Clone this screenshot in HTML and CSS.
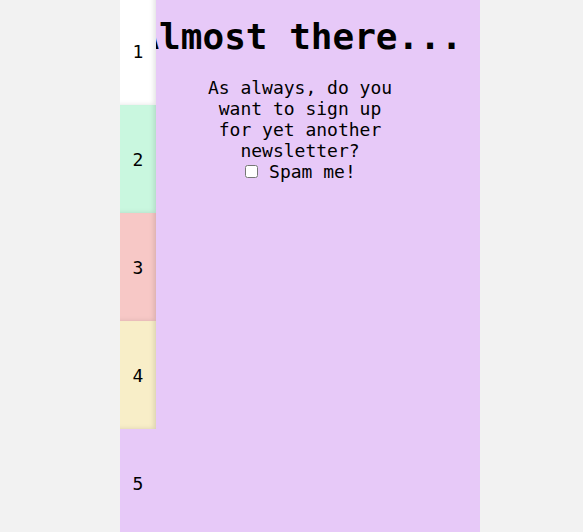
FILE: index.html
```html
<!DOCTYPE html>
<html>
<head>
<meta charset="utf-8">
<link rel="stylesheet" href="styles.css">
</head>
<body>
<div class="frame">
  <div class="panel">
    <h1 class="title">Almost there...</h1>
    <p class="text">As always, do you want to sign up for yet another newsletter?</p>
    <label class="check"><input type="checkbox"> Spam me!</label>
  </div>
  <nav class="tabs">
    <div class="tab t1">1</div>
    <div class="tab t2">2</div>
    <div class="tab t3">3</div>
    <div class="tab t4">4</div>
    <div class="tab t5">5</div>
  </nav>
</div>
</body>
</html>
```
FILE: styles.css
```css
html, body {
  margin: 0;
  padding: 0;
  background: #f2f2f2;
  overflow: hidden;
}
.frame {
  position: relative;
  width: 360px;
  height: 532px;
  margin-left: 120px;
  background: #e7c9f8;
  font-family: "DejaVu Sans Mono", monospace;
  color: #000;
}
.panel {
  display: flex;
  flex-direction: column;
  align-items: center;
  padding-top: 16px;
}
.title {
  margin: 0;
  font-size: 36px;
  font-weight: bold;
  white-space: nowrap;
  line-height: 42px;
}
.text {
  width: 196px;
  margin: 19px 0 0;
  font-size: 18px;
  line-height: 21px;
  text-align: center;
}
.check {
  font-size: 18px;
  line-height: 21px;
}
.check input {
  margin: 0 0 0 1px;
  width: 13px;
  height: 13px;
}
.tabs {
  position: absolute;
  left: 0;
  top: -3px;
  width: 36px;
  display: flex;
  flex-direction: column;
}
.tab {
  height: 108px;
  display: flex;
  align-items: center;
  justify-content: center;
  font-size: 18px;
  box-shadow: inset -4px -2px 5px -2px rgba(0,0,0,0.12);
}
.t1 { background: #ffffff; }
.t2 { background: #c9f7df; }
.t3 { background: #f7c8c6; }
.t4 { background: #f8eec8; }
.t5 { background: #e7c9f8; box-shadow: none; }
```
